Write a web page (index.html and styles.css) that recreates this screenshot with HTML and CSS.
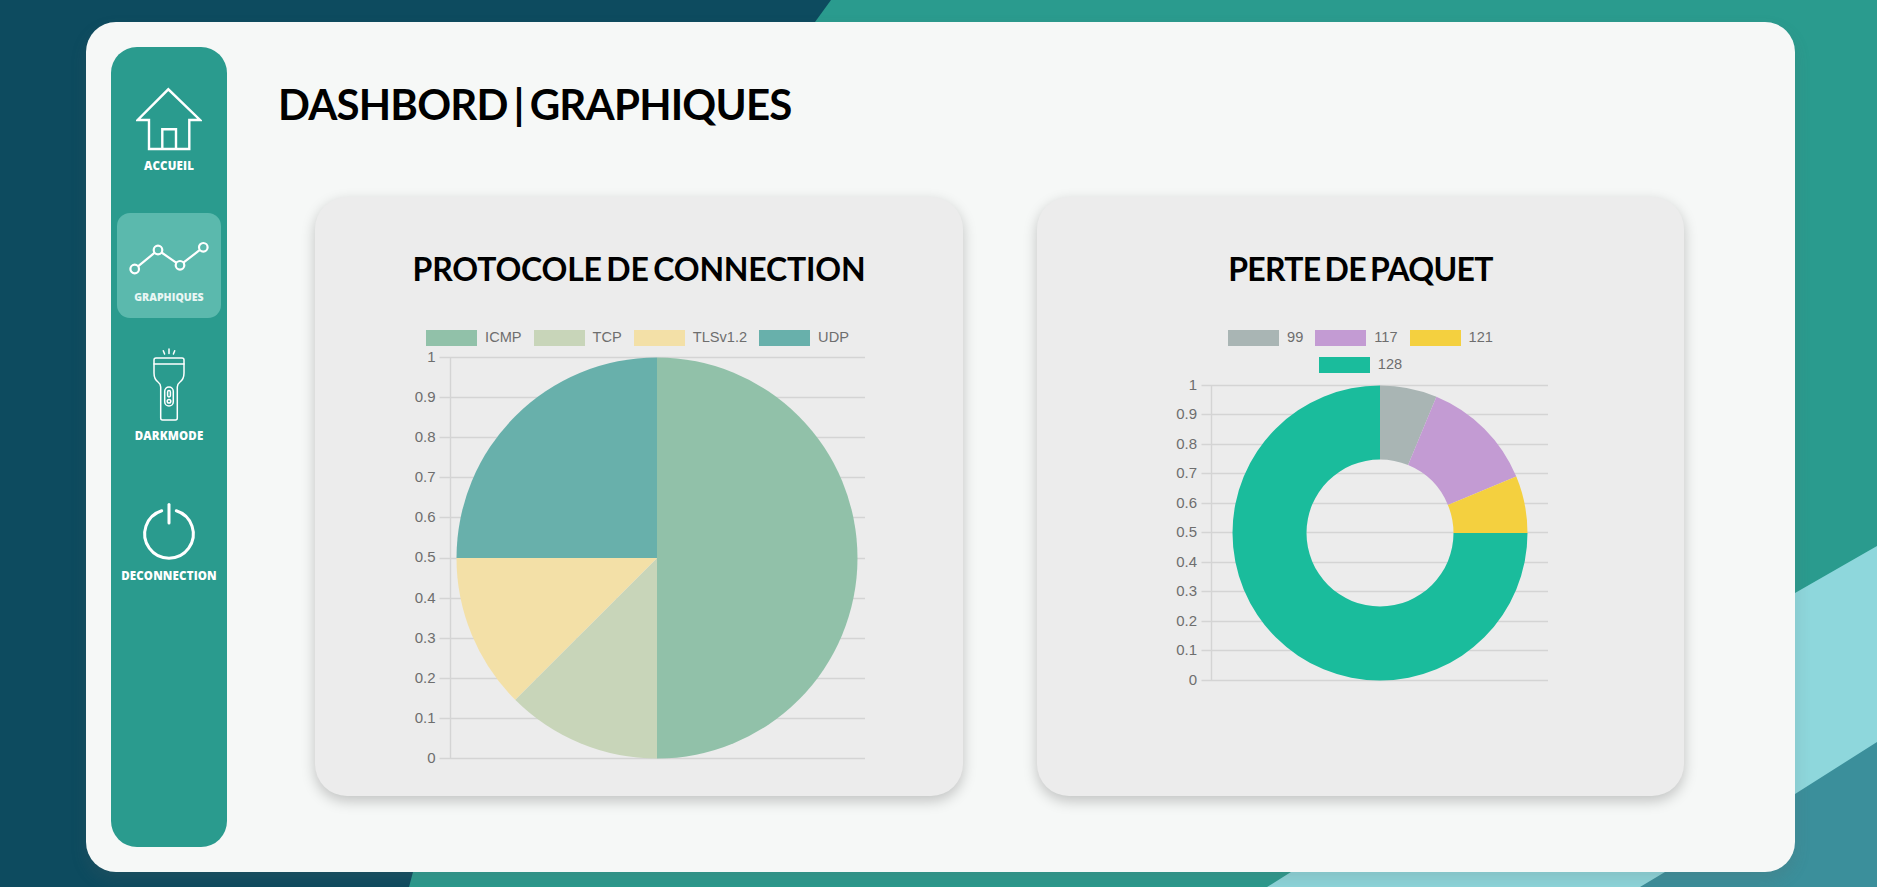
FILE: index.html
```html
<!DOCTYPE html>
<html lang="fr">

<head>
  <meta charset="UTF-8" />
  <meta name="viewport" content="width=device-width, initial-scale=1.0" />
  <title>Dashbord | Graphiques</title>
  <link rel="stylesheet" href="styles.css">
</head>

<body>
  <!-- decor de fond -->
  <svg class="fond" viewBox="0 0 1877 887" preserveAspectRatio="none" aria-hidden="true">
    <polygon class="fond-teal" points="831,0 1877,0 1877,887 409,887 413,872 815,22" />
    <polygon class="fond-clair" points="1267,887 1291,872 1795,593 1877,546 1877,887" />
    <polygon class="fond-bleu" points="1640,887 1795,794 1877,742 1877,887" />
  </svg>

  <div class="panneau">
    <nav class="menu">
      <a class="menu-item item-accueil" href="#">
        <svg class="icone icone-maison" width="66" height="64" viewBox="0 0 66 64">
          <path d="M13 33H1.7L32.3 2.3 64 33H53.3V62H13Z" />
          <path d="M26.3 62V42.3H40V62" />
        </svg>
        <span>ACCUEIL</span>
      </a>
      <a class="menu-item item-graphiques actif" href="#">
        <svg class="icone icone-courbe" width="82" height="36" viewBox="0 0 82 36">
          <circle cx="6.7" cy="28" r="4.3" />
          <circle cx="30" cy="9" r="4.3" />
          <circle cx="52" cy="24.3" r="4.3" />
          <circle cx="75.3" cy="6.3" r="4.3" />
          <path d="M10 25.3 26.7 11.7M33.5 11.5 48.5 21.8M55.4 21.7 71.9 8.9" />
        </svg>
        <span>GRAPHIQUES</span>
      </a>
      <a class="menu-item item-darkmode" href="#">
        <svg class="icone icone-lampe" width="38" height="76" viewBox="0 0 38 76">
          <path d="M19 3V7.5M13.3 4.7 14.6 8M24.7 4.7 23.4 8" />
          <path d="M4 14Q4 12 6 12H32Q34 12 34 14V27Q34 33 30 36 27.3 38 27.3 41V72Q27.3 74 25.5 74H12.5Q10.7 74 10.7 72V41Q10.7 38 8 36 4 33 4 27Z" />
          <path d="M4 18H34" />
          <rect x="14.7" y="41" width="8.6" height="19" rx="4.3" />
          <rect x="17.6" y="44.5" width="2.8" height="6.5" rx="1.4" />
          <circle cx="19" cy="55.3" r="1.8" />
        </svg>
        <span>DARKMODE</span>
      </a>
      <a class="menu-item item-deconnexion" href="#">
        <svg class="icone icone-power" width="58" height="62" viewBox="0 0 58 62">
          <path d="M21.7 9.7A24.3 24.3 0 1 0 36.3 9.7" />
          <path d="M29 3.5V22" />
        </svg>
        <span>DECONNECTION</span>
      </a>
    </nav>

    <main class="contenu">
      <h1>DASHBORD | GRAPHIQUES</h1>

      <div class="cartes">
        <section class="carte carte-protocole">
          <h2>PROTOCOLE DE CONNECTION</h2>
          <ul class="legende">
            <li><i class="c-icmp"></i>ICMP</li>
            <li><i class="c-tcp"></i>TCP</li>
            <li><i class="c-tls"></i>TLSv1.2</li>
            <li><i class="c-udp"></i>UDP</li>
          </ul>
          <svg class="graphe" width="648" height="425" viewBox="0 0 648 425">
            <path class="grille" d="M124.5 7.5H550M124.5 47.5H550M124.5 87.5H550M124.5 127.5H550M124.5 167.5H550M124.5 208.5H550M124.5 248.5H550M124.5 288.5H550M124.5 328.5H550M124.5 368.5H550M124.5 408.5H550M135.5 7.5V408.5" />
            <text x="120.5" y="8">1</text>
            <text x="120.5" y="48">0.9</text>
            <text x="120.5" y="88">0.8</text>
            <text x="120.5" y="128">0.7</text>
            <text x="120.5" y="168">0.6</text>
            <text x="120.5" y="208">0.5</text>
            <text x="120.5" y="249">0.4</text>
            <text x="120.5" y="289">0.3</text>
            <text x="120.5" y="329">0.2</text>
            <text x="120.5" y="369">0.1</text>
            <text x="120.5" y="409">0</text>
            <path class="c-icmp" d="M342 208V7.5A200.5 200.5 0 0 1 342 408.5Z" />
            <path class="c-tcp" d="M342 208V408.5A200.5 200.5 0 0 1 200.2 349.8Z" />
            <path class="c-tls" d="M342 208 200.2 349.8A200.5 200.5 0 0 1 141.5 208Z" />
            <path class="c-udp" d="M342 208H141.5A200.5 200.5 0 0 1 342 7.5Z" />
          </svg>
        </section>

        <section class="carte carte-paquet">
          <h2>PERTE DE PAQUET</h2>
          <ul class="legende">
            <li><i class="c-99"></i>99</li>
            <li><i class="c-117"></i>117</li>
            <li><i class="c-121"></i>121</li>
            <li><i class="c-128"></i>128</li>
          </ul>
          <svg class="graphe" width="647" height="320" viewBox="0 0 647 320">
            <path class="grille" d="M164.5 7.5H511M164.5 36.5H511M164.5 66.5H511M164.5 95.5H511M164.5 125.5H511M164.5 154.5H511M164.5 184.5H511M164.5 213.5H511M164.5 243.5H511M164.5 272.5H511M164.5 302.5H511M174.5 7.5V302.5" />
            <text x="160" y="8">1</text>
            <text x="160" y="37">0.9</text>
            <text x="160" y="67">0.8</text>
            <text x="160" y="96">0.7</text>
            <text x="160" y="126">0.6</text>
            <text x="160" y="155">0.5</text>
            <text x="160" y="185">0.4</text>
            <text x="160" y="214">0.3</text>
            <text x="160" y="244">0.2</text>
            <text x="160" y="273">0.1</text>
            <text x="160" y="303">0</text>
            <path class="c-99" d="M343 7.5A147.5 147.5 0 0 1 399.4 18.7L371.1 87.1A73.5 73.5 0 0 0 343 81.5Z" />
            <path class="c-117" d="M399.4 18.7A147.5 147.5 0 0 1 479.3 98.6L410.9 126.9A73.5 73.5 0 0 0 371.1 87.1Z" />
            <path class="c-121" d="M479.3 98.6A147.5 147.5 0 0 1 490.5 155H416.5A73.5 73.5 0 0 0 410.9 126.9Z" />
            <path class="c-128" d="M490.5 155A147.5 147.5 0 1 1 343 7.5V81.5A73.5 73.5 0 1 0 416.5 155Z" />
          </svg>
        </section>
      </div>
    </main>
  </div>
</body>

</html>
```

FILE: styles.css
```css
html,
body {
  margin: 0;
  height: 100%;
}

body {
  position: relative;
  overflow: hidden;
  background-color: #0d4b5f;
  font-family: "Lato", "Liberation Sans", sans-serif;
}

.fond {
  position: absolute;
  top: 0;
  left: 0;
  width: 100%;
  height: 100%;
}

.fond-teal {
  fill: #2a9b8e;
}

.fond-clair {
  fill: #8ed7dc;
}

.fond-bleu {
  fill: #3b8f9b;
}

.panneau {
  position: relative;
  display: flex;
  box-sizing: border-box;
  width: 1709px;
  height: 850px;
  margin: 22px 0 0 86px;
  padding: 25px;
  background: #f6f8f7;
  border-radius: 30px;
  box-shadow: 0 8px 16px rgba(97, 97, 97, 0.18);
}

/* Menu lateral */
.menu {
  display: flex;
  flex-direction: column;
  align-items: center;
  box-sizing: border-box;
  width: 116px;
  height: 800px;
  padding-top: 36px;
  background: #2a9b8e;
  border-radius: 26px;
}

.menu-item {
  display: flex;
  flex-direction: column;
  align-items: center;
  justify-content: flex-end;
  box-sizing: border-box;
  width: 104px;
  height: 105px;
  padding-bottom: 15px;
  border-radius: 13px;
  color: white;
  font-family: "Open Sans", "Liberation Sans", sans-serif;
  font-size: 11.5px;
  font-weight: 800;
  line-height: 14px;
  letter-spacing: 0.15px;
  text-decoration: none;
  white-space: nowrap;
}

.item-graphiques {
  margin-top: 25px;
  padding-bottom: 14px;
}

.item-darkmode {
  margin-top: 35px;
}

.item-deconnexion {
  margin-top: 35px;
}

.actif {
  background: #5bb9ad;
  color: #e9f6f4;
  font-size: 10.5px;
  letter-spacing: 0.05px;
}

.icone {
  display: block;
  flex-shrink: 0;
  fill: none;
  stroke: white;
}

.icone-maison {
  margin-bottom: 8px;
  stroke-width: 2.4;
}

.icone-courbe {
  margin-bottom: 13px;
  stroke-width: 2.2;
}

.icone-lampe {
  margin-bottom: 7px;
  stroke-width: 1.5;
  stroke-linecap: round;
}

.icone-power {
  margin-bottom: 6px;
  stroke-width: 3;
  stroke-linecap: round;
}

/* Contenu */
.contenu {
  margin-left: 51px;
}

h1 {
  margin: 32px 0 0;
  font-size: 42px;
  font-weight: 700;
  line-height: 50px;
  letter-spacing: -0.8px;
  word-spacing: -3.5px;
  color: black;
  white-space: nowrap;
}

.cartes {
  display: flex;
  gap: 74px;
  margin-top: 68px;
  margin-left: 37px;
}

.carte {
  box-sizing: border-box;
  width: 648px;
  height: 599px;
  padding-top: 52px;
  background: #ececec;
  border-radius: 32px;
  box-shadow: 0 5px 14px rgba(0, 0, 0, 0.22);
}

.carte-paquet {
  width: 647px;
}

h2 {
  margin: 0;
  font-size: 32px;
  font-weight: 700;
  line-height: 40px;
  letter-spacing: -0.2px;
  word-spacing: -3px;
  text-align: center;
  color: black;
  white-space: nowrap;
}

.carte-paquet h2 {
  letter-spacing: -0.7px;
}

.legende {
  display: flex;
  flex-wrap: wrap;
  justify-content: center;
  gap: 11px 12px;
  margin: 41px 0 0;
  padding: 0;
  list-style: none;
  font-family: "Liberation Sans", sans-serif;
  font-size: 14.6px;
  line-height: 14px;
  color: #6e6e6e;
}

.legende li {
  display: flex;
  gap: 8px;
}

.legende i {
  display: block;
  width: 51px;
  height: 16px;
}

.carte-protocole .legende {
  width: 645px;
}

.carte-paquet .legende {
  width: 300px;
  margin-left: auto;
  margin-right: auto;
}

.graphe {
  display: block;
  margin-top: 4px;
  overflow: visible;
}

.carte-paquet .graphe {
  margin-top: 5px;
}

.graphe text {
  font-family: "Liberation Sans", sans-serif;
  font-size: 15px;
  fill: #6e6e6e;
  text-anchor: end;
  dominant-baseline: middle;
}

.grille {
  fill: none;
  stroke: #d4d4d4;
  stroke-width: 1.4;
}

/* Couleurs des series */
.c-icmp {
  fill: #91c1a9;
  background: #91c1a9;
}

.c-tcp {
  fill: #c8d5b9;
  background: #c8d5b9;
}

.c-tls {
  fill: #f3e0a7;
  background: #f3e0a7;
}

.c-udp {
  fill: #68b0ab;
  background: #68b0ab;
}

.c-99 {
  fill: #a9b5b4;
  background: #a9b5b4;
}

.c-117 {
  fill: #c39bd3;
  background: #c39bd3;
}

.c-121 {
  fill: #f4d03f;
  background: #f4d03f;
}

.c-128 {
  fill: #1abc9c;
  background: #1abc9c;
}
```
